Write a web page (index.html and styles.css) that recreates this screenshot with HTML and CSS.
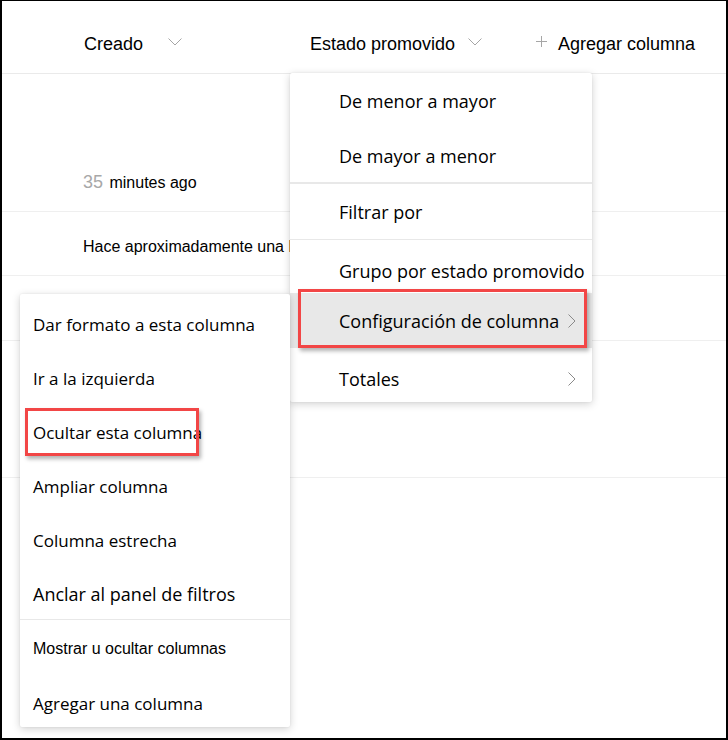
FILE: index.html
```html
<!DOCTYPE html>
<html lang="es">
<head>
  <meta charset="UTF-8" />
  <title>Lista</title>
  <link rel="stylesheet" href="styles.css">
</head>
<body>
  <div class="page">
    <!-- Column headers -->
    <div class="list-header">
      <div class="col col-created">
        <span>Creado</span>
        <svg class="chev" width="14" height="8" viewBox="0 0 14 8"><path d="M0.5 0.5 L7 7 L13.5 0.5" /></svg>
      </div>
      <div class="col col-status">
        <span>Estado promovido</span>
        <svg class="chev" width="14" height="8" viewBox="0 0 14 8"><path d="M0.5 0.5 L7 7 L13.5 0.5" /></svg>
      </div>
      <div class="col col-add">
        <svg class="plus" width="11" height="11" viewBox="0 0 11 11"><path d="M5.5 0 V11 M0 5.5 H11" /></svg>
        <span>Agregar columna</span>
      </div>
    </div>

    <!-- Rows -->
    <div class="row row-tall">
      <div class="cell"><span class="num">35</span> minutes ago</div>
    </div>
    <div class="row row-short">
      <div class="cell">Hace aproximadamente una hora</div>
    </div>
    <div class="row row-short"></div>
    <div class="row row-tall row-last"></div>

    <!-- Column menu -->
    <div class="menu menu-column">
      <div class="menu-item mi-1">De menor a mayor</div>
      <div class="menu-item mi-2">De mayor a menor</div>
      <div class="menu-divider thick"></div>
      <div class="menu-item mi-3">Filtrar por</div>
      <div class="menu-divider"></div>
      <div class="menu-item mi-4">Grupo por estado promovido</div>
      <div class="menu-item mi-5 selected">Configuración de columna
        <svg class="arrow" width="8" height="14" viewBox="0 0 8 14"><path d="M0.5 0.5 L7 7 L0.5 13.5" /></svg>
      </div>
      <div class="menu-item mi-6">Totales
        <svg class="arrow" width="8" height="14" viewBox="0 0 8 14"><path d="M0.5 0.5 L7 7 L0.5 13.5" /></svg>
      </div>
    </div>

    <!-- Column settings submenu -->
    <div class="menu menu-settings">
      <div class="menu-item">Dar formato a esta columna</div>
      <div class="menu-item">Ir a la izquierda</div>
      <div class="menu-item">Ocultar esta columna</div>
      <div class="menu-item">Ampliar columna</div>
      <div class="menu-item">Columna estrecha</div>
      <div class="menu-item big">Anclar al panel de filtros</div>
      <div class="menu-divider"></div>
      <div class="menu-item small">Mostrar u ocultar columnas</div>
      <div class="menu-item last">Agregar una columna</div>
    </div>

    <!-- Callouts -->
    <div class="callout callout-settings"></div>
    <div class="callout callout-hide"></div>
  </div>
</body>
</html>
```

FILE: styles.css
```css
body {
  margin: 0;
  background: #ffffff;
  font-family: "Liberation Sans", Arial, sans-serif;
  color: #000000;
}

.page {
  position: relative;
  width: 728px;
  height: 740px;
  box-sizing: border-box;
  border: 2px solid #000;
  border-top-width: 1px;
  overflow: hidden;
  background: #fff;
}

/* header */
.list-header {
  display: flex;
  align-items: center;
  height: 73px;
  padding-left: 82px;
  border-bottom: 1px solid #eaeaea;
  font-size: 18px;
  box-sizing: border-box;
  padding-top: 15px;
}

.col {
  display: flex;
  align-items: center;
}

.col-created { width: 226px; }
.col-status { width: 225px; }

.chev {
  fill: none;
  stroke: #a6a6a6;
  stroke-width: 1;
  margin-top: -6px;
}

.col-created .chev { margin-left: 25px; }
.col-status .chev { margin-left: 13px; }

.plus {
  fill: none;
  stroke: #a6a6a6;
  stroke-width: 1;
  margin: -6px 11px 0 1px;
}

/* rows */
.row {
  border-bottom: 1px solid #efefef;
  box-sizing: border-box;
  display: flex;
  align-items: flex-end;
  padding-left: 81px;
  font-size: 16px;
}

.row-tall { height: 138px; padding-bottom: 18px; }
.row-short { height: 64px; padding-bottom: 19px; }
.row-short + .row-short { height: 65px; }
.row-last { height: 137px; }

.num {
  color: #a8a8a8;
  font-size: 18px;
  font-family: "Liberation Sans", Arial, sans-serif;
  margin-right: 2px;
}

/* menus */
.menu {
  position: absolute;
  background: #fff;
  box-shadow: 0 2px 8px rgba(0, 0, 0, 0.18), 0 0 2px rgba(0, 0, 0, 0.08);
  border-radius: 2px;
  font-family: "Open Sans", sans-serif;
  font-size: 17px;
}

.menu-item {
  display: flex;
  align-items: center;
  position: relative;
}

.menu-divider {
  height: 1px;
  background: #e8e8e8;
}

.menu-divider.thick { height: 2px; }

.menu-column {
  left: 288px;
  top: 72px;
  width: 302px;
  height: 329px;
  font-size: 18px;
}

.menu-column .menu-item { padding-left: 49px; box-sizing: border-box; }
.mi-1 { height: 56px; }
.mi-2 { height: 53px; }
.mi-3 { height: 55px; padding-top: 1px; }
.mi-4 { height: 53px; padding-top: 8px; }
.mi-5 { height: 55px; }
.mi-6 { height: 57px; padding-top: 4px; }

.menu-item.selected { background: #e8e8e8; }

.arrow {
  position: absolute;
  right: 16px;
  fill: none;
  stroke: #8a8a8a;
  stroke-width: 1;
}

.menu-settings {
  left: 18px;
  top: 293px;
  width: 270px;
  height: 433px;
}

.menu-settings .menu-item {
  height: 54px;
  padding-left: 13px;
}

.menu-settings .menu-item:first-child { margin-top: 3px; }

.menu-settings .menu-item.big { font-size: 18px; }

.menu-settings .menu-divider { margin-top: -2px; }

.menu-settings .menu-item.small {
  font-family: "Liberation Sans", Arial, sans-serif;
  font-size: 16px;
  height: 57px;
}

.menu-settings .menu-item.last { height: 52px; }

/* red callouts */
.callout {
  position: absolute;
  border: 3px solid #f24646;
  box-shadow: 2px 3px 4px rgba(0, 0, 0, 0.3);
}

.callout-settings {
  left: 296px;
  top: 288px;
  width: 283px;
  height: 53px;
}

.callout-hide {
  left: 23px;
  top: 407px;
  width: 168px;
  height: 42px;
}
```
